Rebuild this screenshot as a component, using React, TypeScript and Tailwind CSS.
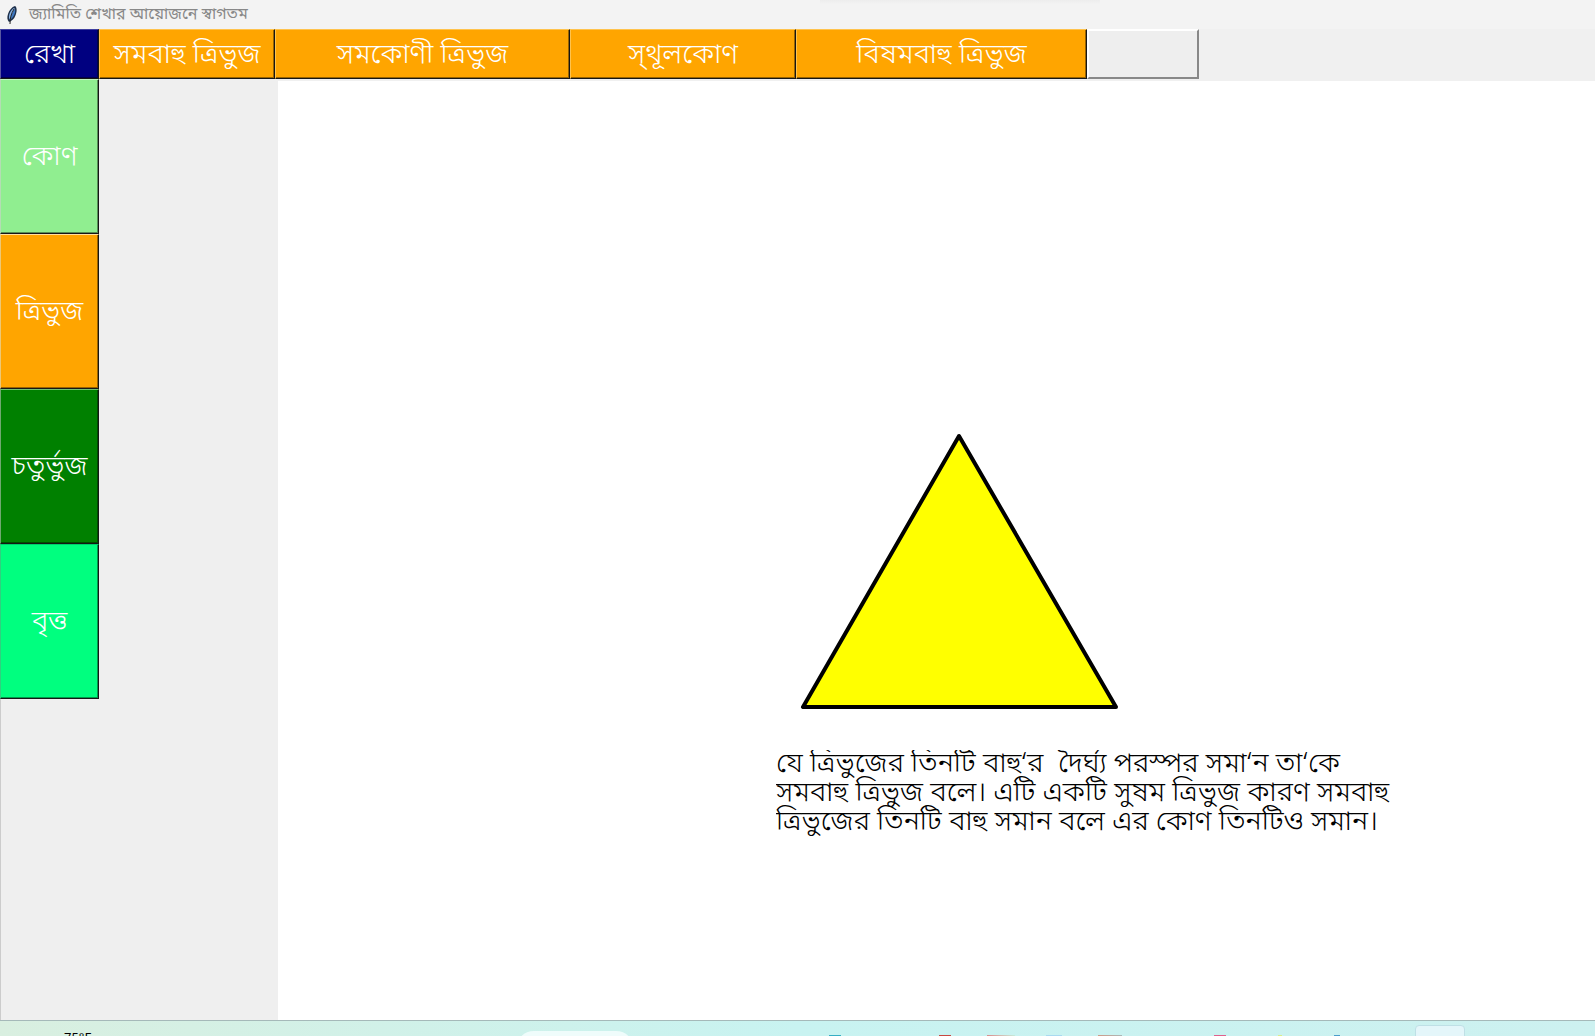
import React from "react";

type Shape = { label: string; className: string };

const topButtons: Shape[] = [
  { label: "সমবাহু ত্রিভুজ", className: "w-[176px]" },
  { label: "সমকোণী ত্রিভুজ", className: "w-[295px]" },
  { label: "স্‌থূলকোণ", className: "w-[226px]" },
  { label: "বিষমবাহু ত্রিভুজ", className: "w-[291px]" },
];

const sideButtons: Shape[] = [
  { label: "কোণ", className: "bg-[#90ee90] border-t-[#c0f6c0] border-l-[#b4dcb4]" },
  { label: "ত্রিভুজ", className: "bg-[#ffa500] border-t-[#ffe0a0] border-l-[#ecc878]" },
  { label: "চতুর্ভুজ", className: "bg-[#008000] border-t-[#70c070] border-l-[#70a870]" },
  { label: "বৃত্ত", className: "bg-[#00ff7f] border-t-[#00d06a] border-l-[#30d080]" },
];

const taskbarIcons: string[] = [
  "left-[829px] w-3 bg-[#35aec4]",
  "left-[939px] w-3 bg-[#c8483f]",
  "left-[987px] w-7 bg-linear-to-r from-[#d88c8c] to-[#c4ebda]",
  "left-[1046px] w-4 bg-[#a9daf0]",
  "left-[1098px] w-6 bg-linear-to-r from-[#cf9a86] to-[#a9b8b8]",
  "left-[1214px] w-3 bg-[#e0608c]",
  "left-[1278px] w-1 bg-[#dbee88]",
  "left-[1334px] w-1.5 bg-[#4a9dcb]",
];

const raised =
  "shrink-0 border border-r-[#161616] border-b-[#161616] pt-[3px] text-[28px] leading-10 font-light whitespace-nowrap text-white shadow-[inset_-1px_-1px_0_rgba(0,0,0,0.4)]";

function Feather() {
  return (
    <svg viewBox="0 0 12 20" className="h-5 w-3" aria-hidden="true">
      <path d="M9 1C6 2 3 5 2 9c-1 3-1 6 1 8l2-1c3-2 4-4 5-7 1-3 1-7-1-8Z" fill="#1d2f4a" />
      <path d="M8 3C5 5 3 8 3 13l1 2c1-4 3-8 5-11Z" fill="#8fb8e8" />
      <path d="M9 4c1 4-2 9-5 11 1-4 2-8 5-11Z" fill="#3f78c0" />
      <path d="M8 4C5 9 4 13 4 19" fill="none" stroke="#222" strokeWidth="1" />
    </svg>
  );
}

function Taskbar() {
  return (
    <footer className="relative h-4 shrink-0 overflow-hidden border-t border-[#a5b9b9] bg-linear-to-r from-[#d9efe0] via-[#c8f3f1] to-[#cdf1f0] font-['Noto_Sans']">
      <span className="absolute top-2 left-16 text-[13px] leading-4 text-black">75°F</span>
      <span className="absolute top-2.5 left-[516px] h-9 w-[118px] rounded-full bg-[#effcfb]" />
      {taskbarIcons.map((c) => (
        <span key={c} className={`${c} absolute bottom-0 h-px`} />
      ))}
      <span className="absolute top-1 left-[1415px] h-10 w-[50px] rounded-sm border border-[#bfe0e6] bg-[#e4f6fa]" />
    </footer>
  );
}

export default function App() {
  return (
    <div className="flex h-screen min-w-0 flex-col overflow-hidden bg-[#f0f0f0] font-['Noto_Sans_Bengali','Noto_Sans','Nirmala_UI',sans-serif]">
      <header className="relative flex h-[29px] shrink-0 items-center gap-[11px] bg-[#f3f3f3] pl-1.5">
        <Feather />
        <h1 className="pt-px text-base leading-5 text-[#888]">জ্যামিতি শেখার আয়োজনে স্বাগতম</h1>
        <span className="absolute top-0 left-[820px] h-1 w-[280px] bg-linear-to-b from-[#ededed] to-[#f3f3f3]" />
      </header>
      <nav className="flex h-[50px] shrink-0">
        <button className={`${raised} w-[99px] border-t-[#4040a0] border-l-[#5858a0] bg-[#000080]`}>রেখা</button>
        {topButtons.map((b) => (
          <button key={b.label} className={`${b.className} ${raised} border-t-[#ffc34d] border-l-[#ffc34d] bg-[#ffa500]`}>
            {b.label}
          </button>
        ))}
        <button aria-label="খালি" className="w-[112px] border-2 border-t-white border-r-[#888] border-b-[#888] border-l-white bg-[#eee]" />
      </nav>
      <div className="flex min-h-0 grow">
        <aside className="flex w-[278px] shrink-0 flex-col items-start bg-[#efefef]">
          {sideButtons.map((b) => (
            <button key={b.label} className={`${b.className} ${raised} h-[155px] w-[99px]`}>
              {b.label}
            </button>
          ))}
          <div className="grow border-l border-[#ccc]" />
        </aside>
        <main className="mt-0.5 grow bg-white pt-[352px] pl-[498px]">
          <svg viewBox="0 0 320 280" className="ml-6 h-[280px] w-80" role="img" aria-label="সমবাহু ত্রিভুজ">
            <polygon points="159,3 3,274 316,274" fill="#ffff00" stroke="#000" strokeWidth="4" strokeLinejoin="round" />
          </svg>
          <p className="mt-[37px] overflow-hidden text-[28px] leading-[29px] font-light whitespace-pre text-black">
            {"যে ত্রিভুজের তিনটি বাহু‘র  দৈর্ঘ্য পরস্পর সমা‘ন তা‘কে\nসমবাহু ত্রিভুজ বলে। এটি একটি সুষম ত্রিভুজ কারণ সমবাহু\nত্রিভুজের তিনটি বাহু সমান বলে এর কোণ তিনটিও সমান।"}
          </p>
        </main>
      </div>
      <Taskbar />
    </div>
  );
}
